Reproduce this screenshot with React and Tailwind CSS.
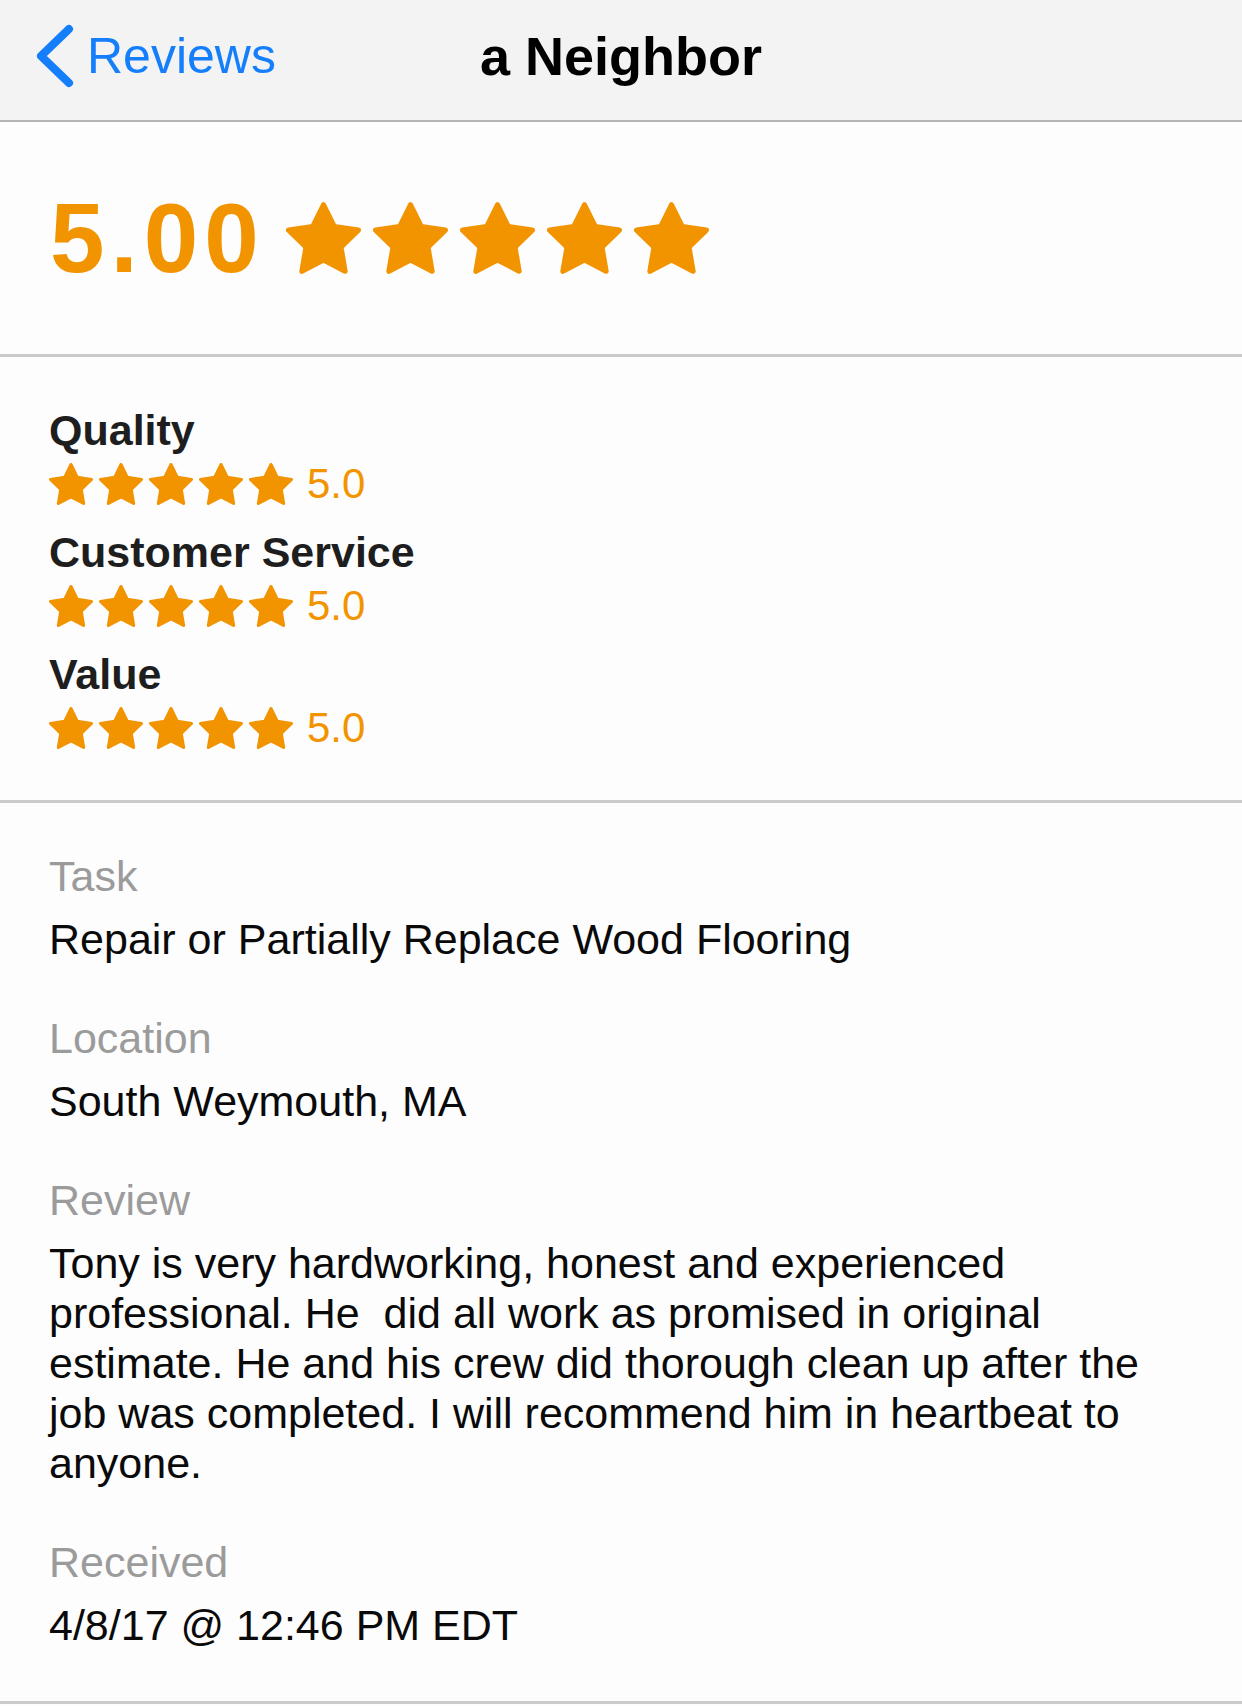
const ORANGE = '#f29400';

const Star = ({ className }) => (
  <svg
    viewBox="1.25 1.25 21.5 20.52"
    className={className}
    fill={ORANGE}
    stroke={ORANGE}
    strokeWidth="1.5"
    strokeLinejoin="round"
  >
    <polygon points="12,2 15.09,8.26 22,9.27 17,14.14 18.18,21.02 12,17.77 5.82,21.02 7,14.14 2,9.27 8.91,8.26" />
  </svg>
);

const Stars = ({ size, gap }) => (
  <div className={`flex items-center ${gap}`}>
    {[0, 1, 2, 3, 4].map((i) => (
      <Star key={i} className={size} />
    ))}
  </div>
);

const ratings = [
  { label: 'Quality', score: '5.0' },
  { label: 'Customer Service', score: '5.0' },
  { label: 'Value', score: '5.0' },
];

const Field = ({ label, children }) => (
  <div className="flex flex-col">
    <div className="text-[43px] leading-[50px] text-[#9b9b9b]">{label}</div>
    <div className="mt-[13px] text-[43px] leading-[50px] text-[#0a0a0a]">{children}</div>
  </div>
);

const reviewLines = [
  'Tony is very hardworking, honest and experienced',
  'professional. He  did all work as promised in original',
  'estimate. He and his crew did thorough clean up after the',
  'job was completed. I will recommend him in heartbeat to',
  'anyone.',
];

export default function App() {
  return (
    <div className="w-[1242px] min-h-[1706px] bg-[#fdfdfd] font-['Liberation_Sans',Arial,sans-serif]">
      {/* Nav bar */}
      <header className="grid h-[122px] grid-cols-3 items-center border-b-2 border-[#b4b4b4] bg-[#f3f3f3] pb-[8px]">
        <div className="flex items-center pl-[35px]">
          <svg width="40" height="64" viewBox="0 0 40 64" fill="none">
            <polyline
              points="34,5 6,32 34,59"
              stroke="#157efb"
              strokeWidth="8"
              strokeLinecap="round"
              strokeLinejoin="round"
            />
          </svg>
          <span className="ml-[12px] text-[50px] leading-none text-[#157efb]">Reviews</span>
        </div>
        <div className="whitespace-nowrap text-center text-[54px] font-bold leading-none text-black">
          a Neighbor
        </div>
        <div />
      </header>

      {/* Overall score */}
      <section className="flex h-[232px] items-center pl-[50px]">
        <span className="text-[98px] font-bold leading-none tracking-[6px] text-[#f29400]">5.00</span>
        <div className="ml-[21px]">
          <Stars size="w-[75px] h-[72px]" gap="gap-[12px]" />
        </div>
      </section>
      <div className="h-[3px] bg-[#cbcbcb]" />

      {/* Category ratings */}
      <section className="flex flex-col gap-[14px] pb-[45px] pl-[49px] pt-[46px]">
        {ratings.map((r) => (
          <div key={r.label} className="flex flex-col">
            <div className="h-[54px] text-[43px] font-bold leading-[54px] text-[#1e1e1e]">{r.label}</div>
            <div className="flex h-[54px] items-center">
              <Stars size="w-[44px] h-[42px]" gap="gap-[6px]" />
              <span className="ml-[14px] text-[42px] leading-none text-[#f29400]">{r.score}</span>
            </div>
          </div>
        ))}
      </section>
      <div className="h-[3px] bg-[#cbcbcb]" />

      {/* Details */}
      <section className="flex flex-col gap-[49px] pb-[51px] pl-[49px] pt-[48px]">
        <Field label="Task">Repair or Partially Replace Wood Flooring</Field>
        <Field label="Location">South Weymouth, MA</Field>
        <Field label="Review">
          {reviewLines.map((line) => (
            <div key={line} className="whitespace-pre">
              {line}
            </div>
          ))}
        </Field>
        <Field label="Received">4/8/17 @ 12:46 PM EDT</Field>
      </section>
      <div className="h-[3px] bg-[#cbcbcb]" />
    </div>
  );
}
